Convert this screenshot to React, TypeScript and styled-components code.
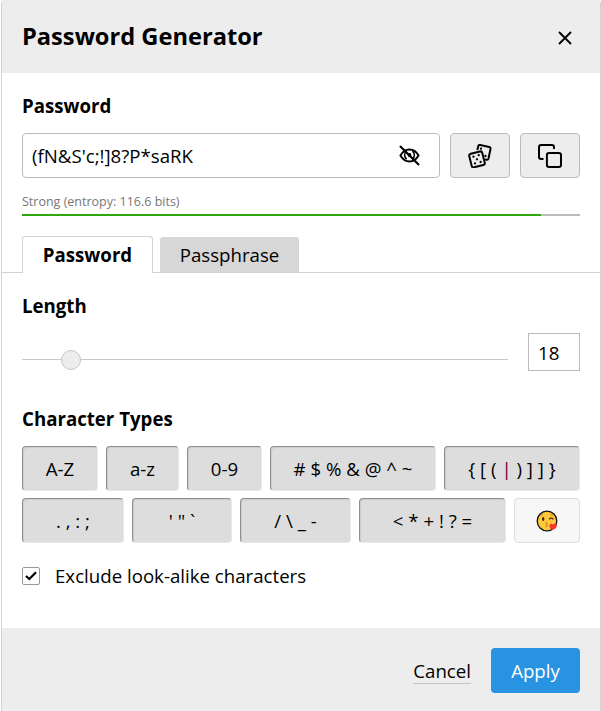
import React from 'react';
import styled, { createGlobalStyle, css } from 'styled-components';

const GlobalStyle = createGlobalStyle`
  *, *::before, *::after { box-sizing: border-box; }
  html, body { margin: 0; background: #fff; }
  body { overflow: hidden; }
  button, input { font: inherit; color: inherit; }
`;

const Dialog = styled.section`
  width: 600px;
  height: 711px;
  margin-left: 1px;
  display: flex;
  flex-direction: column;
  border: solid #d3d3d3;
  border-width: 0 1px;
  border-radius: 4px 4px 0 0;
  overflow: hidden;
  background: #fff;
  color: #000;
  font: 400 18.67px/26px 'Open Sans', sans-serif;
`;

const Header = styled.header`
  display: flex;
  flex: 0 0 73px;
  align-items: center;
  justify-content: space-between;
  padding: 0 20px;
  background: #ededed;
`;

const Title = styled.h1`
  margin: 0 0 2px;
  font-size: 23.65px;
  line-height: 32px;
  font-weight: 700;
`;

const CloseButton = styled.button`
  display: flex;
  width: 30px;
  height: 30px;
  margin-top: 3px;
  padding: 0;
  align-items: center;
  justify-content: center;
  border: 0;
  background: none;
`;

const Content = styled.main`
  display: flex;
  flex-direction: column;
  flex: 0 0 555px;
  padding-top: 20px;
`;

const Section = styled.div<{ $top?: number }>`
  display: flex;
  flex-direction: column;
  padding: 0 20px;
  margin-top: ${(p) => p.$top ?? 0}px;
`;

const Heading = styled.h2`
  margin: 0;
  font-size: 18.67px;
  line-height: 26px;
  font-weight: 700;
`;

const PasswordRow = styled.div`
  display: flex;
  gap: 10px;
  margin-top: 14px;
  height: 45px;
`;

const PasswordField = styled.div`
  display: flex;
  flex: 1;
  align-items: center;
  justify-content: space-between;
  padding: 0 19px 0 9px;
  border: 1px solid #bbb;
  border-radius: 4px;
`;

const IconButton = styled.button`
  display: flex;
  width: 60px;
  align-items: center;
  justify-content: center;
  padding: 0;
  border: 1px solid #bbb;
  border-radius: 4px;
  background: #ededed;
`;

const StrengthLabel = styled.div`
  margin-top: 14px;
  font-size: 12.5px;
  line-height: 20px;
  color: #777;
`;

const StrengthTrack = styled.div`
  height: 2px;
  margin-top: 2px;
  background: #bbb;
`;

const StrengthFill = styled.div`
  width: 93%;
  height: 2px;
  background: #2ca80a;
`;

const Tabs = styled.div`
  display: flex;
  align-items: flex-end;
  gap: 7px;
  height: 37px;
  margin-top: 20px;
  padding-left: 20px;
  box-shadow: inset 0 -1px #d3d3d3;
`;

const Tab = styled.button<{ $active?: boolean; $width: number }>`
  width: ${(p) => p.$width}px;
  padding: 0;
  border: 0;
  border-radius: 3px 3px 0 0;
  ${(p) =>
    p.$active
      ? css`
          height: 37px;
          border: solid #d3d3d3;
          border-width: 1px 1px 0;
          background: #fff;
          font-weight: 700;
        `
      : css`
          height: 36px;
          border-bottom: 1px solid #d3d3d3;
          background: #d7d7d7;
        `}
`;

const LengthRow = styled.div`
  display: flex;
  align-items: center;
  justify-content: space-between;
  height: 38px;
  margin-top: 14px;
`;

const Slider = styled.div`
  display: flex;
  align-items: center;
  width: 486px;
  height: 20px;
  margin-top: 16px;
  background: linear-gradient(#c8c8c8, #c8c8c8) 0 9px / 100% 1px no-repeat;
`;

const SliderHandle = styled.div`
  width: 20px;
  height: 20px;
  margin-left: 39px;
  border: 1px solid #c5c5c5;
  border-radius: 50%;
  background: #ededed;
`;

const LengthValue = styled.div`
  width: 52px;
  height: 38px;
  padding-left: 9px;
  line-height: 37px;
  border: 1px solid #bbb;
`;

const TypeRows = styled.div`
  display: flex;
  flex-direction: column;
  gap: 7px;
  margin-top: 14px;
`;

const TypeRow = styled.div`
  display: flex;
  gap: 8px;
`;

const TypeButton = styled.button<{ $width: number; $off?: boolean }>`
  display: flex;
  align-items: center;
  justify-content: center;
  width: ${(p) => p.$width}px;
  height: 45px;
  padding: 0;
  white-space: pre;
  border: 1px solid;
  border-radius: 4px;
  border-color: ${(p) => (p.$off ? '#ddd' : '#8e8e8e #e8e8e8 #e8e8e8 #8e8e8e')};
  background: ${(p) => (p.$off ? '#f7f7f7' : '#ddd')};
  box-shadow: ${(p) => (p.$off ? 'none' : 'inset 1px 1px 1px #ccc')};
`;

const Pipe = styled.span`
  color: #6b0035;
`;

const Option = styled.label`
  display: flex;
  align-items: center;
  gap: 15px;
  height: 26px;
`;

const CheckMark = styled.span`
  display: flex;
  width: 18px;
  height: 18px;
  align-items: center;
  justify-content: center;
  border: 1px solid #999;
  border-radius: 2px;
`;

const Footer = styled.footer`
  display: flex;
  flex: 1;
  align-items: flex-start;
  justify-content: flex-end;
  gap: 20px;
  padding: 20px;
  background: #ededed;
`;

const CancelLink = styled.a`
  height: 27px;
  margin-top: 9px;
  line-height: 27px;
  border-bottom: 1px solid #c5c5c5;
`;

const ApplyButton = styled.button`
  width: 89px;
  height: 45px;
  padding: 0;
  border: 0;
  border-radius: 4px;
  background: #2893e1;
  color: #fff;
`;

const HiddenEyeIcon = () => (
  <svg width="21" height="21" viewBox="0 0 22 22" fill="none" stroke="#000" strokeWidth="2">
    <path d="M1.500 11C4 6.700 7.200 4.700 11 4.700s7 2 9.500 6.300c-2.500 4.300-5.700 6.300-9.500 6.300S4 15.300 1.500 11Z" />
    <path d="M8 6.500a5 5 0 0 0 0 8.200M14 6.500a5 5 0 0 1 0 8.200" strokeWidth="1.600" />
    <circle cx="11" cy="10.500" r="2" fill="#000" stroke="none" />
    <path d="m1 1 20 20" strokeWidth="2.200" />
  </svg>
);

const DiceIcon = () => (
  <svg width="24" height="24" viewBox="0 0 24 24" fill="none" stroke="#000" strokeWidth="2">
    <path d="m9.300 6 1-4q.4-1.300 1.900-1l9 2q1.600.4 1.300 2l-2 9.500q-.4 1.600-2 1.300l-1.500-.3" />
    <rect x="2.300" y="8.400" width="13.400" height="14" rx="2" transform="rotate(-14 9 15.400)" />
    <g fill="#000" stroke="none">
      <circle cx="5.500" cy="12.700" r="1.150" />
      <circle cx="10.700" cy="11.200" r="1.150" />
      <circle cx="9" cy="15.300" r="1.150" />
      <circle cx="7" cy="19.400" r="1.150" />
      <circle cx="12.600" cy="18" r="1.150" />
      <circle cx="13" cy="4.700" r="1.150" />
      <circle cx="17.500" cy="12" r="1.150" />
    </g>
  </svg>
);

const CopyIcon = () => (
  <svg width="24" height="24" viewBox="0 0 24 24" fill="none" stroke="#000" strokeWidth="2">
    <path d="M5.500 15H3.200Q1 15 1 12.800V3.200Q1 1 3.200 1h10.600Q16 1 16 3.200V5" />
    <rect x="8.900" y="9" width="14.100" height="14" rx="2.200" />
  </svg>
);

const KissIcon = () => (
  <svg width="22" height="22" viewBox="0 0 22 22">
    <circle cx="11" cy="11" r="9.800" fill="#ffc83d" stroke="#111" strokeWidth="1.300" />
    <path d="M4 6.300q1-1.800 3-1.700M14 4.600q2.300-.2 3.400 1.400" fill="none" stroke="#d58b18" />
    <ellipse cx="7.200" cy="9" rx="1.200" ry="2.100" fill="#402a18" />
    <path d="M13.200 9.300q2-2.200 4.200.1" fill="none" stroke="#402a18" strokeWidth="1.300" />
    <path d="M9.300 12.500q3 .3 1.500 1.700l-1 .5q3 .4 1.300 1.800-.7.600-1.800.6" fill="none" stroke="#c98518" />
    <path d="M16.900 14.800c1-2 3.900-1.500 4 .7.100 2.200-2 3.800-4.600 4.600-2-1.400-3.600-3.500-2.800-5.100.8-1.600 2.800-1.500 3.400-.2Z" fill="#f4382e" />
  </svg>
);

export default function App() {
  return (
    <>
      <GlobalStyle />
      <Dialog>
        <Header>
          <Title>Password Generator</Title>
          <CloseButton aria-label="Close">
            <svg width="14" height="14" viewBox="0 0 14 14" stroke="#000" strokeWidth="1.900">
              <path d="m1 1 12 12M13 1 1 13" />
            </svg>
          </CloseButton>
        </Header>
        <Content>
          <Section>
            <Heading>Password</Heading>
            <PasswordRow>
              <PasswordField>
                <span>{"(fN&S'c;!]8?P*saRK"}</span>
                <HiddenEyeIcon />
              </PasswordField>
              <IconButton aria-label="Generate"><DiceIcon /></IconButton>
              <IconButton aria-label="Copy"><CopyIcon /></IconButton>
            </PasswordRow>
            <StrengthLabel>Strong (entropy: 116.6 bits)</StrengthLabel>
            <StrengthTrack><StrengthFill /></StrengthTrack>
          </Section>
          <Tabs>
            <Tab $active $width={131}>Password</Tab>
            <Tab $width={139}>Passphrase</Tab>
          </Tabs>
          <Section $top={20}>
            <Heading>Length</Heading>
            <LengthRow>
              <Slider><SliderHandle /></Slider>
              <LengthValue>18</LengthValue>
            </LengthRow>
          </Section>
          <Section $top={35}>
            <Heading>Character Types</Heading>
            <TypeRows>
              <TypeRow>
                <TypeButton $width={76}>A-Z</TypeButton>
                <TypeButton $width={73}>a-z</TypeButton>
                <TypeButton $width={75}>0-9</TypeButton>
                <TypeButton $width={166}># $ % &amp; @ ^ ~</TypeButton>
                <TypeButton $width={136}>{'{ [ ( '}<Pipe>|</Pipe>{' ) ] ] }'}</TypeButton>
              </TypeRow>
              <TypeRow>
                <TypeButton $width={102}>. , : ;</TypeButton>
                <TypeButton $width={100}>{'\' " `'}</TypeButton>
                <TypeButton $width={111}>{'/ \\ _ -'}</TypeButton>
                <TypeButton $width={147}>{'< * + ! ? ='}</TypeButton>
                <TypeButton $width={66} $off aria-label="Emoji"><KissIcon /></TypeButton>
              </TypeRow>
            </TypeRows>
          </Section>
          <Section $top={20}>
            <Option>
              <CheckMark>
                <svg width="12" height="10" viewBox="0 0 12 10" fill="none" stroke="#000" strokeWidth="2.200">
                  <path d="m1 5 3.300 3L11 1.300" />
                </svg>
              </CheckMark>
              Exclude look-alike characters
            </Option>
          </Section>
        </Content>
        <Footer>
          <CancelLink>Cancel</CancelLink>
          <ApplyButton>Apply</ApplyButton>
        </Footer>
      </Dialog>
    </>
  );
}
